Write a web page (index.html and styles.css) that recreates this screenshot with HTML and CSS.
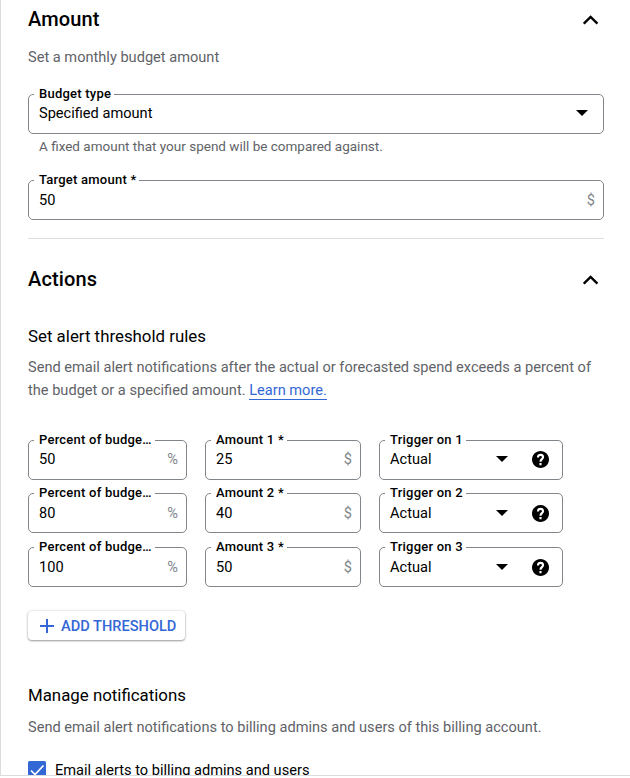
FILE: index.html
```html
<!DOCTYPE html>
<html lang="en">
<head>
<meta charset="utf-8">
<title>Budget</title>
<link rel="stylesheet" href="styles.css">
</head>
<body>
<svg class="defs" aria-hidden="true">
  <symbol id="chevron" viewBox="0 0 16 10"><path d="M.8 8.700 7.600 1.900l6.800 6.800" fill="none" stroke="#000" stroke-width="2.4"/></symbol>
  <symbol id="caret" viewBox="0 0 12 6"><path d="M0 0h12L6 6z"/></symbol>
  <symbol id="help" viewBox="2 2 20 20"><path d="M12 2C6.48 2 2 6.48 2 12s4.48 10 10 10 10-4.480 10-10S17.520 2 12 2z"/><path d="M9 9.500c0-1.700 1.300-3 3-3s3 1.200 3 2.800c0 2.200-3 2.400-3 5.200M12 16.200v2.500" fill="none" stroke="#fff" stroke-width="2.5"/></symbol>
</svg>
<main class="panel">
  <section class="amount">
    <header class="head"><h2>Amount</h2><svg class="chevron"><use href="#chevron"/></svg></header>
    <p class="desc">Set a monthly budget amount</p>
    <fieldset class="field"><legend>Budget type</legend><div class="control"><span class="value">Specified amount</span><svg class="caret"><use href="#caret"/></svg></div></fieldset>
    <p class="hint">A fixed amount that your spend will be compared against.</p>
    <fieldset class="field low"><legend>Target amount *</legend><div class="control"><span class="value">50</span><span class="unit">$</span></div></fieldset>
  </section>
  <section class="actions">
    <header class="head"><h2>Actions</h2><svg class="chevron"><use href="#chevron"/></svg></header>
    <h3>Set alert threshold rules</h3>
    <p class="desc wrap">Send email alert notifications after the actual or forecasted spend exceeds a percent of<br>the budget or a specified amount. <a class="link">Learn more.</a></p>
    <div class="rules">
      <fieldset class="field"><legend>Percent of budge…</legend><div class="control"><span class="value">50</span><span class="unit">%</span></div></fieldset>
      <fieldset class="field"><legend>Amount 1 *</legend><div class="control"><span class="value">25</span><span class="unit">$</span></div></fieldset>
      <fieldset class="field trigger"><legend>Trigger on 1</legend><div class="control"><span class="value">Actual</span><svg class="caret"><use href="#caret"/></svg><svg class="help"><use href="#help"/></svg></div></fieldset>
      <fieldset class="field low"><legend>Percent of budge…</legend><div class="control"><span class="value">80</span><span class="unit">%</span></div></fieldset>
      <fieldset class="field low"><legend>Amount 2 *</legend><div class="control"><span class="value">40</span><span class="unit">$</span></div></fieldset>
      <fieldset class="field trigger low"><legend>Trigger on 2</legend><div class="control"><span class="value">Actual</span><svg class="caret"><use href="#caret"/></svg><svg class="help"><use href="#help"/></svg></div></fieldset>
      <fieldset class="field low"><legend>Percent of budge…</legend><div class="control"><span class="value">100</span><span class="unit">%</span></div></fieldset>
      <fieldset class="field low"><legend>Amount 3 *</legend><div class="control"><span class="value">50</span><span class="unit">$</span></div></fieldset>
      <fieldset class="field trigger low"><legend>Trigger on 3</legend><div class="control"><span class="value">Actual</span><svg class="caret"><use href="#caret"/></svg><svg class="help"><use href="#help"/></svg></div></fieldset>
    </div>
    <button class="add"><svg class="plus" viewBox="0 0 14 14"><path d="M7 0v14M0 7h14" stroke="#3367d6" stroke-width="2"/></svg><span>ADD THRESHOLD</span></button>
    <h3 class="manage">Manage notifications</h3>
    <p class="desc">Send email alert notifications to billing admins and users of this billing account.</p>
    <div class="check"><svg class="box" viewBox="0 0 18 18"><rect width="18" height="18" rx="1.5" fill="#3367d6"/><path d="m3 9.5 4 4 8.500-9" fill="none" stroke="#fff" stroke-width="1.7"/></svg><span>Email alerts to billing admins and users</span></div>
  </section>
</main>
</body>
</html>
```
FILE: styles.css
```css
* { box-sizing: border-box; }
body { margin: 0; background: #fff; color: #000; font-family: Roboto, sans-serif; font-size: 14.6px; height: 778px; overflow: hidden; }
h2, h3, p { margin: 0; white-space: nowrap; }
.defs { display: block; width: 0; height: 0; }
.panel { height: 776px; overflow: hidden; border-left: 1px solid #dadce0; border-bottom: 1px solid #dadce0; padding: 0 26px 0 27px; }
.amount { height: 239px; border-bottom: 1px solid #dadce0; }
.head { display: flex; align-items: center; justify-content: space-between; height: 38px; padding-right: 5px; }
h2 { font-size: 20px; font-weight: 500; line-height: 24px; letter-spacing: .15px; }
.chevron { width: 16px; height: 10px; margin-top: 2px; }
.desc { color: #5f6368; line-height: 24px; margin-top: 7px; }
.field { display: block; min-width: 0; height: 47px; margin: 0; padding: 0 0 0 5px; border: 1px solid #80868b; border-radius: 5px; }
.desc + .field { margin-top: 18px; }
legend { height: 15px; padding: 0 3px 0 5px; font-size: 13px; font-weight: 500; line-height: 13px; letter-spacing: .23px; white-space: nowrap; }
.control { display: flex; align-items: center; height: 22px; padding: 0 8px 0 5px; }
.low .control { margin-top: 1px; }
.value { flex: 1; }
.unit { color: #80868b; }
.caret { width: 12px; height: 6px; margin-right: 7px; }
.hint { color: #5f6368; font-size: 13.5px; line-height: 20px; margin: 2px 0 17px 11px; }
.actions .head { margin-top: 21px; }
h3 { font-size: 16.85px; font-weight: 400; line-height: 24px; margin-top: 26px; }
.desc.wrap { line-height: 23px; margin-top: 8px; }
.link { color: #3367d6; border-bottom: 1px solid #3367d6; }
.rules { display: grid; grid-template-columns: 159px 156px 184px; grid-template-rows: 53px 54px 47px; column-gap: 18px; margin-top: 31px; }
.trigger .help { width: 17px; height: 17px; margin: 0 5px 0 17px; }
.add { display: flex; align-items: center; width: 157px; height: 29px; margin-top: 24px; padding: 0 0 0 12px; border: 0; border-radius: 4px; background: #fff; color: #3367d6; font: 500 14.6px Roboto, sans-serif; white-space: nowrap; box-shadow: 0 1px 2px rgba(0,0,0,.35), 0 0 3px rgba(0,0,0,.16); }
.plus { width: 14px; height: 14px; margin-right: 7px; }
.manage { margin-top: 43px; }
.manage + .desc { margin-top: 8px; }
.check { display: flex; align-items: center; height: 18px; margin-top: 22px; gap: 9px; white-space: nowrap; }
.box { width: 18px; height: 18px; }
```
